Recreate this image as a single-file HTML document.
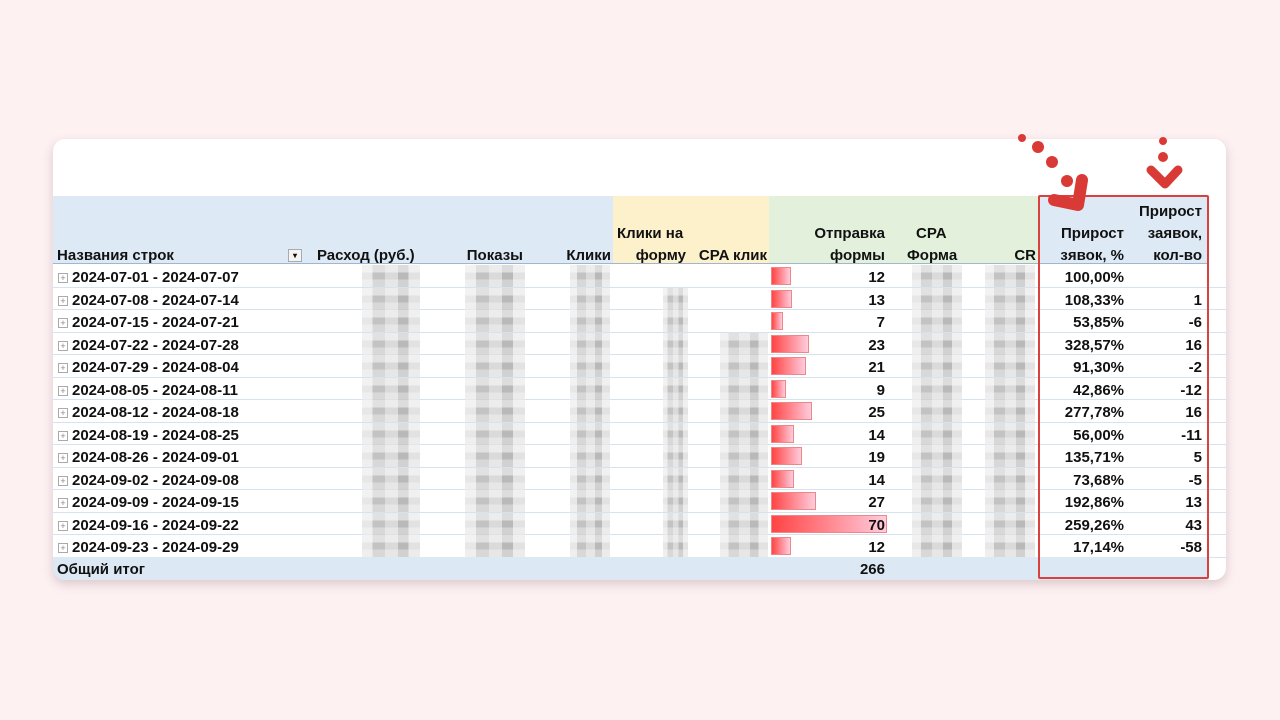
<!DOCTYPE html>
<html><head><meta charset="utf-8"><style>
*{margin:0;padding:0;box-sizing:border-box}
body{width:1280px;height:720px;background:#fdf1f2;position:relative;overflow:hidden;font-family:"Liberation Sans",sans-serif;font-weight:bold;font-size:15px;color:#111}
.card{position:absolute;left:53px;top:139px;width:1173px;height:441px;background:#fff;border-radius:12px;box-shadow:0 4px 10px rgba(120,80,90,.25);overflow:hidden}
.a{position:absolute}
.hd{position:absolute;top:57px;height:68px}
.t{position:absolute;white-space:nowrap;line-height:22px;margin-top:2px}
.r{text-align:right}
.row{position:absolute;left:0;width:1173px;height:22.5px;border-bottom:1px solid #d6e3ef}
.blur{position:absolute;height:22px;background:linear-gradient(180deg,rgba(255,255,255,.5) 0 33%,rgba(255,255,255,0) 33% 66%,rgba(255,255,255,.35) 66%),linear-gradient(90deg,#e2e2e2 0 18%,#b5b5b5 18% 40%,#d2d2d2 40% 62%,#a8a8a8 62% 80%,#dcdcdc 80%);opacity:.8}
.bar{position:absolute;left:718px;height:18px;top:2px;background:linear-gradient(90deg,#f44 0%,#fcd 100%);border:1px solid #e88}
.pl{position:absolute;left:-14px;top:6px;width:10px;height:10px;border:1px solid #aaa;font-size:9px;line-height:8px;text-align:center;color:#888;font-weight:normal}
</style></head><body>
<div class="card">
 <div class="hd" style="left:0;width:560px;background:#dde9f5"></div>
 <div class="hd" style="left:560px;width:156px;background:#fdf1cc"></div>
 <div class="hd" style="left:716px;width:269px;background:#e3f0dc"></div>
 <div class="hd" style="left:985px;width:170px;background:#dde9f5"></div>
 <div class="a" style="left:0;top:124px;width:1155px;height:1px;background:#9eb6ce"></div>
 <div class="t" style="left:4px;top:104px">Названия строк</div>
 <div class="a" style="left:235px;top:110px;width:14px;height:13px;border:1px solid #aaa;background:#f4f4f4;font-size:8px;line-height:11px;text-align:center">▾</div>
 <div class="t" style="left:264px;top:104px">Расход (руб.)</div>
 <div class="t r" style="left:380px;width:90px;top:104px">Показы</div>
 <div class="t r" style="left:480px;width:78px;top:104px">Клики</div>
 <div class="t" style="left:564px;top:82px">Клики на</div>
 <div class="t r" style="left:560px;width:73px;top:104px">форму</div>
 <div class="t r" style="left:630px;width:84px;top:104px">CPA клик</div>
 <div class="t r" style="left:740px;width:92px;top:82px">Отправка</div>
 <div class="t r" style="left:740px;width:92px;top:104px">формы</div>
 <div class="t" style="left:863px;top:82px">CPA</div>
 <div class="t" style="left:854px;top:104px">Форма</div>
 <div class="t r" style="left:930px;width:53px;top:104px">CR</div>
 <div class="t r" style="left:990px;width:81px;top:82px">Прирост</div>
 <div class="t r" style="left:990px;width:81px;top:104px">зявок, %</div>
 <div class="t r" style="left:1075px;width:74px;top:60px">Прирост</div>
 <div class="t r" style="left:1075px;width:74px;top:82px">заявок,</div>
 <div class="t r" style="left:1075px;width:74px;top:104px">кол-во</div>
 <div id="rows"></div>
 <div class="a" style="left:0;top:418px;width:1155px;height:23px;background:#dce8f4"></div>
 <div class="t" style="left:4px;top:418px">Общий итог</div>
 <div class="t r" style="left:740px;width:92px;top:418px">266</div>
</div>
<div class="a" style="left:1038px;top:195px;width:171px;height:384px;border:2px solid #d9413e;border-radius:2px"></div>
<svg class="a" style="left:0;top:0" width="1280" height="720">
 <g fill="#d93a35"><circle cx="1022" cy="138" r="4"/><circle cx="1038" cy="147" r="6"/><circle cx="1052" cy="162" r="6"/><circle cx="1067" cy="181" r="6"/><circle cx="1163" cy="141" r="4"/><circle cx="1163" cy="157" r="5"/></g>
 <path d="M1082 180 L1078 205 L1054 200" stroke="#d93a35" stroke-width="12" fill="none" stroke-linecap="round" stroke-linejoin="round"/>
 <path d="M1151 170 L1165 184 L1178 170" stroke="#d93a35" stroke-width="9" fill="none" stroke-linecap="round" stroke-linejoin="round"/>
</svg>
<script>
var d=[["2024-07-01 - 2024-07-07",12,"100,00%",""],["2024-07-08 - 2024-07-14",13,"108,33%","1"],["2024-07-15 - 2024-07-21",7,"53,85%","-6"],["2024-07-22 - 2024-07-28",23,"328,57%","16"],["2024-07-29 - 2024-08-04",21,"91,30%","-2"],["2024-08-05 - 2024-08-11",9,"42,86%","-12"],["2024-08-12 - 2024-08-18",25,"277,78%","16"],["2024-08-19 - 2024-08-25",14,"56,00%","-11"],["2024-08-26 - 2024-09-01",19,"135,71%","5"],["2024-09-02 - 2024-09-08",14,"73,68%","-5"],["2024-09-09 - 2024-09-15",27,"192,86%","13"],["2024-09-16 - 2024-09-22",70,"259,26%","43"],["2024-09-23 - 2024-09-29",12,"17,14%","-58"]];
var h="";d.forEach(function(r,i){var y=126+i*22.5;
h+='<div class="row" style="top:'+y+'px">'
+'<div class="blur" style="left:309px;width:58px"></div><div class="blur" style="left:412px;width:60px"></div><div class="blur" style="left:517px;width:40px"></div>'
+(i>0?'<div class="blur" style="left:610px;width:25px"></div>':'')+(i>2?'<div class="blur" style="left:667px;width:48px"></div>':'')
+'<div class="blur" style="left:859px;width:50px"></div><div class="blur" style="left:932px;width:50px"></div>'
+'<div class="bar" style="width:'+Math.round(r[1]*1.65)+'px"></div>'
+'<div class="t" style="left:19px;top:0"><span class="pl">+</span>'+r[0]+'</div>'
+'<div class="t r" style="left:740px;width:92px;top:0">'+r[1]+'</div>'
+'<div class="t r" style="left:990px;width:81px;top:0">'+r[2]+'</div>'
+'<div class="t r" style="left:1075px;width:74px;top:0">'+r[3]+'</div></div>';});
document.getElementById("rows").innerHTML=h;
</script>
</body></html>
